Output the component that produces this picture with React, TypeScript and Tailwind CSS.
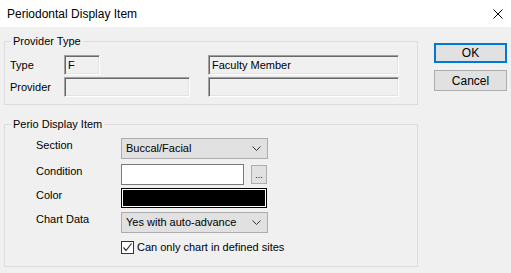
import React from "react";

const sunken =
  "h-[20px] border border-t-[#a0a0a0] border-l-[#a0a0a0] border-b-white border-r-white shadow-[inset_1px_1px_0_#696969,inset_-1px_-1px_0_#e3e3e3] bg-[#f0f0f0] pl-[3px] leading-[18px]";

function Chevron() {
  return (
    <svg width="9" height="6" viewBox="0 0 9 6" className="mr-[6px]">
      <path d="M0.5 0.5 L4.5 4.5 L8.5 0.5" fill="none" stroke="#333" strokeWidth="1" />
    </svg>
  );
}

function Select({ value }: { value: string }) {
  return (
    <div className="w-[147px] h-[21px] border border-[#adadad] bg-[#e1e1e1] flex items-center justify-between pl-[4px]">
      <span>{value}</span>
      <Chevron />
    </div>
  );
}

export default function App() {
  return (
    <div
      className="w-[511px] h-[273px] bg-[#f0f0f0] text-black text-[11px] leading-[13px] overflow-hidden"
      style={{ fontFamily: '"Liberation Sans", Arial, sans-serif' }}
    >
      {/* Title bar */}
      <div className="h-[27px] bg-white flex items-center justify-between pl-[7px] pr-[7px]">
        <span className="text-[12px] leading-[16px]">Periodontal Display Item</span>
        <svg width="10" height="10" viewBox="0 0 10 10" className="mr-[1px]">
          <path d="M0.5 0.5 L9.5 9.5 M9.5 0.5 L0.5 9.5" stroke="#000" strokeWidth="1" />
        </svg>
      </div>

      <div className="flex px-[4px]">
        {/* Left column */}
        <div className="w-[414px]">
          <fieldset className="mt-[8px] border border-[#dcdcdc] px-0">
            <legend className="ml-[6px] px-[2px] leading-[13px]">Provider Type</legend>
            <div className="pl-[5px] pt-[7px] pb-[7px] flex flex-col gap-[2px]">
              <div className="flex items-center">
                <span className="w-[54px]">Type</span>
                <div className={`${sunken} w-[36px]`}>F</div>
                <div className={`${sunken} w-[191px] ml-[108px]`}>Faculty Member</div>
              </div>
              <div className="flex items-center">
                <span className="w-[54px]">Provider</span>
                <div className={`${sunken} w-[126px]`}></div>
                <div className={`${sunken} w-[191px] ml-[18px]`}></div>
              </div>
            </div>
          </fieldset>

          <fieldset className="mt-[13px] border border-[#dcdcdc] px-0 h-[149px]">
            <legend className="ml-[6px] px-[2px] leading-[13px]">Perio Display Item</legend>
            <div className="pl-[31px] pt-[7px] flex flex-col">
              <div className="flex items-start">
                <span className="w-[85px] pt-[1px]">Section</span>
                <Select value="Buccal/Facial" />
              </div>
              <div className="flex items-start mt-[5px]">
                <span className="w-[85px] pt-[1px]">Condition</span>
                <div className="w-[123px] h-[21px] border border-[#7a7a7a] bg-white"></div>
                <div className="ml-[7px] mt-[1px] w-[16px] h-[19px] border border-[#adadad] bg-[#e1e1e1] flex items-end justify-center pb-[3px] text-[9px] leading-[9px]">
                  ...
                </div>
              </div>
              <div className="flex items-start mt-[3px]">
                <span className="w-[85px] pt-[1px]">Color</span>
                <div className="w-[146px] h-[20px] border border-black bg-black shadow-[inset_0_0_0_1px_#ffffff]"></div>
              </div>
              <div className="flex items-start mt-[4px]">
                <span className="w-[85px] pt-[1px]">Chart Data</span>
                <Select value="Yes with auto-advance" />
              </div>
              <div className="flex items-center mt-[8px] ml-[85px]">
                <div className="w-[13px] h-[13px] border border-[#333333] bg-white flex items-center justify-center">
                  <svg width="11" height="11" viewBox="0 0 11 11">
                    <path d="M1.5 5.5 L4 8.5 L9.5 1.5" fill="none" stroke="#333" strokeWidth="1.2" />
                  </svg>
                </div>
                <span className="ml-[3px]">Can only chart in defined sites</span>
              </div>
            </div>
          </fieldset>
        </div>

        {/* Buttons */}
        <div className="ml-[16px] mt-[16px] flex flex-col gap-[7px]">
          <button className="w-[73px] h-[20px] border-2 border-[#0078d7] bg-[#e1e1e1] text-[12px] leading-[14px]">
            OK
          </button>
          <button className="w-[73px] h-[21px] border border-[#adadad] bg-[#e1e1e1] text-[12px] leading-[14px]">
            Cancel
          </button>
        </div>
      </div>
    </div>
  );
}
